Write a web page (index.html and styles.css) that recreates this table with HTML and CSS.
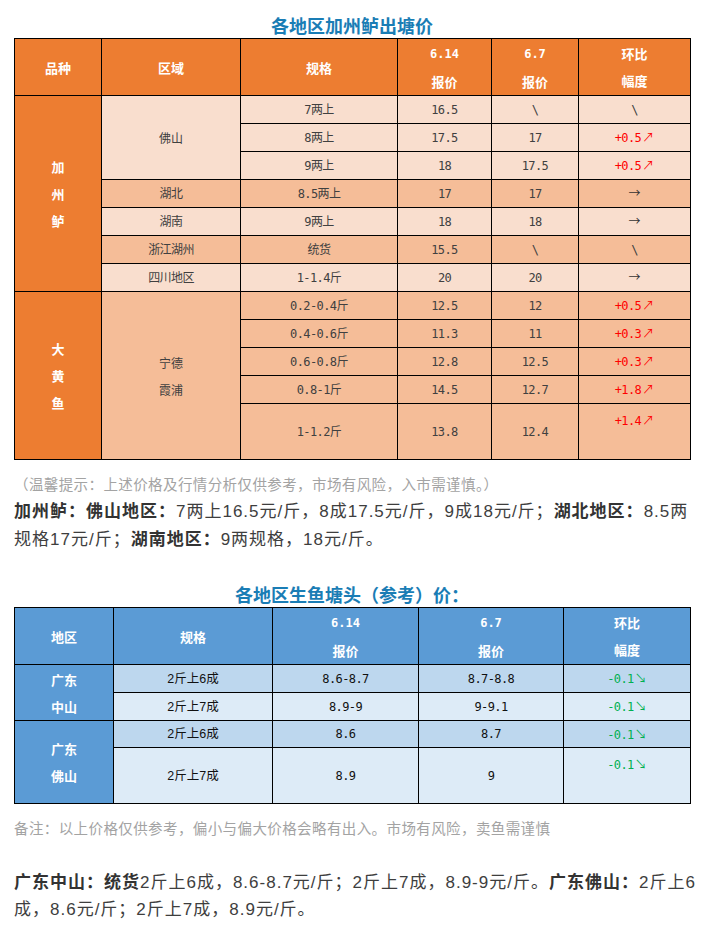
FILE: index.html
```html
<!DOCTYPE html>
<html lang="zh-CN">
<head>
<meta charset="utf-8">
<title>各地区加州鲈出塘价</title>
<link rel="stylesheet" href="styles.css">
</head>
<body>
<div class="page">
  <h2 class="title">各地区加州鲈出塘价</h2>
  <table class="grid orange">
    <colgroup><col style="width:87px"><col style="width:139px"><col style="width:157px"><col style="width:94px"><col style="width:87px"><col style="width:112px"></colgroup>
    <tr class="hd">
      <th>品种</th><th>区域</th><th>规格</th>
      <th><span class="d">6.14</span><br>报价</th>
      <th><span class="d">6.7</span><br>报价</th>
      <th>环比<br>幅度</th>
    </tr>
    <tr class="lt"><td class="kind" rowspan="7">加<br>州<br>鲈</td><td rowspan="3" class="area">佛山</td><td>7两上</td><td>16.5</td><td>\</td><td>\</td></tr>
    <tr class="lt"><td>8两上</td><td>17.5</td><td>17</td><td class="up">+0.5<span class="ar">↗</span></td></tr>
    <tr class="lt"><td>9两上</td><td>18</td><td>17.5</td><td class="up">+0.5<span class="ar">↗</span></td></tr>
    <tr class="dk"><td>湖北</td><td>8.5两上</td><td>17</td><td>17</td><td><span class="ar flat">→</span></td></tr>
    <tr class="lt"><td>湖南</td><td>9两上</td><td>18</td><td>18</td><td><span class="ar flat">→</span></td></tr>
    <tr class="dk"><td>浙江湖州</td><td>统货</td><td>15.5</td><td>\</td><td>\</td></tr>
    <tr class="lt"><td>四川地区</td><td>1-1.4斤</td><td>20</td><td>20</td><td><span class="ar flat">→</span></td></tr>
    <tr class="dk"><td class="kind" rowspan="5">大<br>黄<br>鱼</td><td rowspan="5" class="area two">宁德<br>霞浦</td><td>0.2-0.4斤</td><td>12.5</td><td>12</td><td class="up">+0.5<span class="ar">↗</span></td></tr>
    <tr class="dk"><td>0.4-0.6斤</td><td>11.3</td><td>11</td><td class="up">+0.3<span class="ar">↗</span></td></tr>
    <tr class="dk"><td>0.6-0.8斤</td><td>12.8</td><td>12.5</td><td class="up">+0.3<span class="ar">↗</span></td></tr>
    <tr class="dk"><td>0.8-1斤</td><td>14.5</td><td>12.7</td><td class="up">+1.8<span class="ar">↗</span></td></tr>
    <tr class="dk tall"><td>1-1.2斤</td><td>13.8</td><td>12.4</td><td class="up top">+1.4<span class="ar">↗</span></td></tr>
  </table>

  <p class="note">（温馨提示：上述价格及行情分析仅供参考，市场有风险，入市需谨慎。）</p>
  <p class="para"><b>加州鲈：佛山地区：</b>7两上16.5元/斤，8成17.5元/斤，9成18元/斤；<b>湖北地区：</b>8.5两规格17元/斤；<b>湖南地区：</b>9两规格，18元/斤。</p>

  <h2 class="title second">各地区生鱼塘头（参考）价：</h2>
  <table class="grid blue">
    <colgroup><col style="width:99px"><col style="width:159px"><col style="width:146px"><col style="width:145px"><col style="width:127px"></colgroup>
    <tr class="hd">
      <th>地区</th><th>规格</th>
      <th><span class="d">6.14</span><br>报价</th>
      <th><span class="d">6.7</span><br>报价</th>
      <th>环比<br>幅度</th>
    </tr>
    <tr class="b1"><td class="reg" rowspan="2">广东<br>中山</td><td class="spec">2斤上6成</td><td>8.6-8.7</td><td>8.7-8.8</td><td class="dn">-0.1<span class="ar">↘</span></td></tr>
    <tr class="b2"><td class="spec">2斤上7成</td><td>8.9-9</td><td>9-9.1</td><td class="dn">-0.1<span class="ar">↘</span></td></tr>
    <tr class="b1 short"><td class="reg" rowspan="2">广东<br>佛山</td><td class="spec">2斤上6成</td><td>8.6</td><td>8.7</td><td class="dn">-0.1<span class="ar">↘</span></td></tr>
    <tr class="b2 tall"><td class="spec">2斤上7成</td><td>8.9</td><td>9</td><td class="dn top">-0.1<span class="ar">↘</span></td></tr>
  </table>

  <p class="note note2">备注：以上价格仅供参考，偏小与偏大价格会略有出入。市场有风险，卖鱼需谨慎</p>
  <p class="para para2"><b>广东中山：统货</b>2斤上6成，8.6-8.7元/斤；2斤上7成，8.9-9元/斤。<b>广东佛山：</b>2斤上6成，8.6元/斤；2斤上7成，8.9元/斤。</p>
</div>
</body>
</html>
```

FILE: styles.css
```css
html, body {
  margin: 0;
  padding: 0;
  background: #ffffff;
}

body {
  font-family: "Liberation Sans", "Noto Sans CJK SC", sans-serif;
}

.page {
  margin-left: 14px;
  width: 686px;
}

.title {
  margin: 12px 0 0;
  width: 676px;
  text-align: center;
  font-size: 18px;
  line-height: 26px;
  font-weight: bold;
  color: #1a7db5;
  font-family: "Noto Sans CJK SC", sans-serif;
}

.title.second {
  margin-top: 27px;
}

.grid {
  border-collapse: collapse;
  table-layout: fixed;
  width: 676px;
}

.grid th,
.grid td {
  border: 1px solid #000;
  padding: 0;
  text-align: center;
  vertical-align: middle;
  height: 27px;
  font-family: "DejaVu Sans Mono", "Noto Sans CJK SC", monospace;
  font-size: 12px;
  letter-spacing: -0.6px;
  line-height: 18px;
  color: #404040;
}

.grid .hd th {
  height: 55px;
  color: #ffffff;
  font-family: "Noto Sans CJK SC", sans-serif;
  font-size: 13px;
  font-weight: bold;
  letter-spacing: 0;
  line-height: 27px;
}

.grid .hd .d {
  font-family: "DejaVu Sans Mono", monospace;
  font-size: 12px;
  letter-spacing: 0;
}

.grid .tall td {
  height: 55px;
}

.grid .tall td.top {
  vertical-align: top;
  padding-top: 7px;
  height: 48px;
}

.orange .hd th { background: #ed7d31; }
.orange .lt { background: #f9dece; }
.orange .dk { background: #f5bd98; }
.orange td.area { background: #f9dece; }
.orange .dk td.area { background: #f5bd98; }

.grid td.kind {
  background: #ed7d31;
  color: #ffffff;
  font-family: "Noto Sans CJK SC", sans-serif;
  font-size: 13px;
  font-weight: bold;
  letter-spacing: 0;
  line-height: 27px;
}

.grid td.area {
  font-family: "Noto Sans CJK SC", sans-serif;
  letter-spacing: 0;
  line-height: 27px;
}

.grid td.up {
  color: #ff0000;
}

.grid td.dn {
  color: #00b050;
}

.grid .ar {
  font-family: "Noto Sans CJK SC", sans-serif;
  font-size: 12px;
  letter-spacing: 0;
  margin-left: 1px;
}

.grid .ar.flat {
  margin-left: 0;
  color: #333333;
}

.blue .hd th { background: #5b9bd5; height: 56px; }
.blue .b1 { background: #bdd7ee; }
.blue .b2 { background: #ddebf7; }
.blue td { color: #111111; }
.blue .short td { height: 26px; }

.grid td.reg {
  background: #5b9bd5;
  color: #ffffff;
  font-family: "Noto Sans CJK SC", sans-serif;
  font-size: 13px;
  font-weight: bold;
  letter-spacing: 0;
  line-height: 27px;
}

.grid td.spec {
  font-family: "Liberation Sans", "Noto Sans CJK SC", sans-serif;
  letter-spacing: 0;
  font-size: 12.5px;
}

.note {
  margin: 12px 0 0;
  font-size: 14.5px;
  line-height: 26px;
  letter-spacing: 0.4px;
  color: #a3a3a3;
}

.para {
  margin: 0;
  font-size: 17px;
  line-height: 28px;
  letter-spacing: 1px;
  color: #3e3e3e;
}

.para b {
  color: #333333;
}

.para.para2 {
  margin-top: 27px;
  line-height: 27px;
}
```
